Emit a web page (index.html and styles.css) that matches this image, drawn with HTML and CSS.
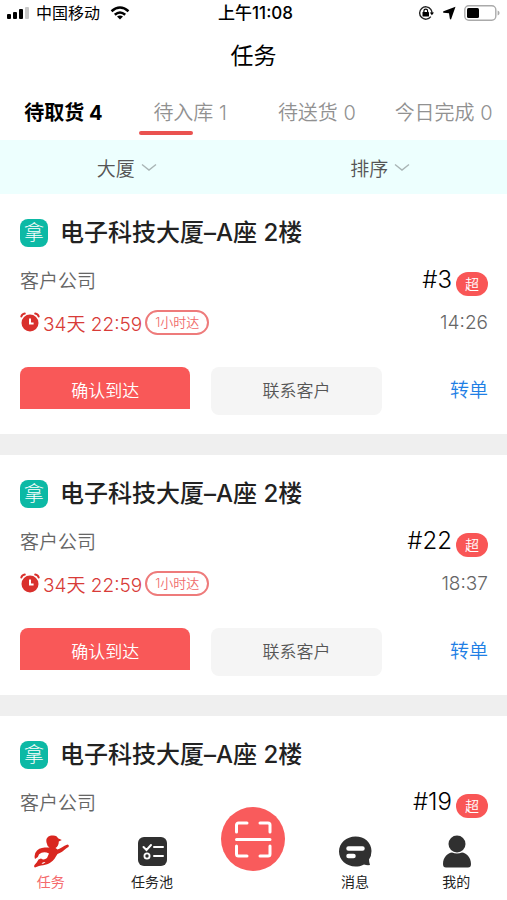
FILE: index.html
```html
<!DOCTYPE html>
<html lang="zh-CN">
<head>
<meta charset="utf-8">
<meta name="viewport" content="width=device-width, initial-scale=1">
<title>任务</title>
<link rel="stylesheet" href="styles.css">
</head>
<body>
<svg class="defs" aria-hidden="true">
  <symbol id="alarm" viewBox="0 0 20 20">
    <circle cx="10" cy="11" r="8.5" fill="#d9302c"/>
    <path d="M1.3 4.500Q2 2 4.800 1.600M18.700 4.500Q18 2 15.200 1.600" fill="none" stroke="#d9302c" stroke-width="2" stroke-linecap="round"/>
    <path d="M10 6.500v5h3.600" fill="none" stroke="#fff" stroke-width="2"/>
  </symbol>
  <symbol id="chevron" viewBox="0 0 16 9">
    <path d="M1 1.500l7 5.500 7-5.500" fill="none" stroke="#a9b5b5" stroke-width="1.4"/>
  </symbol>
</svg>

<div class="status">
  <div class="status-side">
    <svg width="23" height="12" viewBox="0 0 23 12"><rect x="0" y="7" width="4" height="5" rx="1"/><rect x="6" y="5" width="4" height="7" rx="1"/><rect x="12" y="2" width="4" height="10" rx="1"/><rect x="18" y="0" width="4" height="12" rx="1" fill="#c8c8c8"/></svg>
    <span class="carrier">中国移动</span>
    <svg width="20" height="14" viewBox="0 0 20 14" fill="none" stroke="#000" stroke-width="2.5"><path d="M1.500 5.200Q10-2.200 18.500 5.200M4.800 8.800Q10 4.200 15.200 8.800"/><path d="M10 13.500L7 10.600Q10 8.400 13 10.600z" fill="#000" stroke="none"/></svg>
  </div>
  <span class="clock">上午11:08</span>
  <div class="status-side status-right">
    <svg width="16" height="16" viewBox="0 0 16 16"><path d="M12.800 4.300A6.200 6.200 0 1 0 12.800 11.700M12.800 4.300Q14 6 14 8" fill="none" stroke="#222" stroke-width="1.400"/><path d="M11.800 7.500h4.200l-2.100 2.800z"/><rect x="4.500" y="7" width="6.500" height="4.500" rx=".6"/><path d="M5.900 7V5.900a1.850 1.850 0 0 1 3.700 0V7" fill="none" stroke="#000" stroke-width="1.200"/></svg>
    <svg width="14" height="14" viewBox="0 0 14 14"><path d="M13.500.8L9 13.500Q8 13.500 7.800 12.500L7 7.300 1.500 6.800Q.3 6 1.500 5.300z"/></svg>
    <svg width="36" height="16" viewBox="0 0 36 16"><rect x=".8" y=".8" width="31" height="14.400" rx="4" fill="#fff" stroke="#aaa" stroke-width="1.400"/><rect x="3" y="3" width="12" height="10" rx="1.500"/><path d="M33.600 5.500q2 .6 2 2.500t-2 2.500z" fill="#aaa"/></svg>
  </div>
</div>

<header class="title-bar"><h1>任务</h1></header>

<nav class="tabs" aria-label="任务状态">
  <button class="tab tab-strong">待取货 4</button>
  <button class="tab tab-marked">待入库 1</button>
  <button class="tab">待送货 0</button>
  <button class="tab">今日完成 0</button>
</nav>

<div class="filters">
  <button class="filter">大厦<svg class="chevron"><use href="#chevron"/></svg></button>
  <button class="filter">排序<svg class="chevron"><use href="#chevron"/></svg></button>
</div>

<main class="list">
  <article class="card">
    <div class="place"><span class="tag">拿</span><h2>电子科技大厦–A座 2楼</h2></div>
    <div class="row company"><span>客户公司</span><span class="order"><span class="number">#3</span><span class="badge">超</span></span></div>
    <div class="row time"><span class="left"><svg class="alarm"><use href="#alarm"/></svg><span>34天 22:59</span><span class="pill">1小时达</span></span><time>14:26</time></div>
    <div class="actions"><button class="confirm">确认到达</button><button class="contact">联系客户</button><a class="transfer" href="#">转单</a></div>
  </article>
  <article class="card">
    <div class="place"><span class="tag">拿</span><h2>电子科技大厦–A座 2楼</h2></div>
    <div class="row company"><span>客户公司</span><span class="order"><span class="number">#22</span><span class="badge">超</span></span></div>
    <div class="row time"><span class="left"><svg class="alarm"><use href="#alarm"/></svg><span>34天 22:59</span><span class="pill">1小时达</span></span><time>18:37</time></div>
    <div class="actions"><button class="confirm">确认到达</button><button class="contact">联系客户</button><a class="transfer" href="#">转单</a></div>
  </article>
  <article class="card">
    <div class="place"><span class="tag">拿</span><h2>电子科技大厦–A座 2楼</h2></div>
    <div class="row company"><span>客户公司</span><span class="order"><span class="number">#19</span><span class="badge">超</span></span></div>
  </article>
</main>

<nav class="bottom" aria-label="主导航">
  <a class="item current" href="#">
    <svg width="36" height="34" viewBox="0 0 36 34"><path d="M13.500 8.500C12.500 4 15.500 1.500 19.500 1.500C22.500 1.200 24.500 2.700 25 4.200L28.800 6L25.800 7.500C25.800 10.500 24.500 13 22.500 14L24.500 15.500C28 14.500 30 12 34.500 10.500Q36.500 11 35.500 13C31.500 15 29.500 18.500 24.500 20C22.500 23 21 26.500 17.500 28.500C13.500 31.500 7 31 2 33.500Q.5 33 1.500 31C3 29 4 28.500 5.500 25.500L8 24.500Q11 26.500 14 24L16 19.500Q12 17.500 8.500 18.800Q5.500 19.800 4.800 23L2 25Q.5 20 4 16.500C7.500 13.200 12 13.500 16.500 13.500Q14 12 13.500 8.500z" fill="#d9261f"/><path d="M8.500 30Q9.500 27.500 12.500 28Q11 29.800 8.500 30z" fill="#fff"/></svg>
    <span>任务</span>
  </a>
  <a class="item" href="#">
    <svg width="36" height="34" viewBox="0 0 36 34"><rect x="4" y="3" width="29" height="29" rx="6" fill="#303030"/><path d="M9.500 13l3 3 4.500-5M20 13h9M20 22h9" fill="none" stroke="#fff" stroke-width="2" stroke-linecap="round"/><circle cx="13" cy="22" r="2.600" fill="none" stroke="#fff" stroke-width="1.800"/></svg>
    <span>任务池</span>
  </a>
  <div class="item"><button class="scan" aria-label="扫码"><svg width="38" height="38" viewBox="0 0 38 38" fill="none" stroke="#fff" stroke-width="3" stroke-linecap="round"><path d="M2.500 12V5a2 2 0 0 1 2-2H13M26 3h8a2 2 0 0 1 2 2v7M36 26v8a2 2 0 0 1-2 2H26M13 36H4.500a2 2 0 0 1-2-2V26M2.500 19.500h33.500"/></svg></button></div>
  <a class="item" href="#">
    <svg width="36" height="34" viewBox="0 0 36 34"><path d="M18.500 2.500C27.500 2.500 34.500 8.500 34.500 17Q34.500 22 32 25.500Q32 28 33 31Q30 31.500 27 30.500C24 32.200 21 32.500 18.500 32.500C9.500 32.500 2 26 2 17.500S9.500 2.500 18.500 2.500z" fill="#303030"/><path d="M11.500 14.500h14M11.500 22h5" stroke="#fff" stroke-width="4.500" stroke-linecap="round"/></svg>
    <span>消息</span>
  </a>
  <a class="item" href="#">
    <svg width="36" height="34" viewBox="0 0 36 34"><circle cx="19" cy="10" r="8.500" fill="#303030"/><path d="M5 30C5 23 10 19 14 18.500Q19 20.500 24 18.500C28 19 33 23 33 30Q33 33.500 30 33.500H8Q5 33.500 5 30z" fill="#303030"/></svg>
    <span>我的</span>
  </a>
</nav>
</body>
</html>
```

FILE: styles.css
```css
* { box-sizing: border-box; }

body {
  margin: 0;
  height: 100vh;
  display: flex;
  flex-direction: column;
  overflow: hidden;
  background: #fff;
  color: #000;
  font-family: "Inter", "Noto Sans CJK SC", sans-serif;
}

button {
  margin: 0;
  padding: 0;
  border: 0;
  background: none;
  font: inherit;
  color: inherit;
}

a { color: inherit; text-decoration: none; }
h1, h2 { margin: 0; }
.defs { position: absolute; width: 0; height: 0; }

.status {
  display: flex;
  align-items: center;
  height: 26px;
  padding: 0 7px;
  font-size: 16px;
  line-height: 24px;
}

.status-side { flex: 1; display: flex; align-items: center; gap: 6px; }
.status-right { justify-content: flex-end; gap: 8px; }
.carrier { margin-right: 4px; }
.clock { padding-left: 4px; font-size: 17px; font-weight: 500; }

.title-bar {
  height: 60px;
  display: flex;
  align-items: center;
  justify-content: center;
}

.title-bar h1 { font-size: 23px; font-weight: 400; line-height: 32px; }

.tabs {
  display: grid;
  grid-template-columns: repeat(4, 1fr);
  height: 54px;
}

.tab {
  position: relative;
  color: #919191;
  font-size: 20px;
  font-weight: 350;
  line-height: 28px;
  white-space: nowrap;
}

.tab-strong { color: #000; font-weight: 700; }

.tab-marked::after {
  content: "";
  position: absolute;
  left: 12px;
  bottom: 5px;
  width: 54px;
  height: 4px;
  border-radius: 2px;
  background: #ea5250;
}

.filters {
  display: grid;
  grid-template-columns: 1fr 1fr;
  height: 54px;
  background: #edfffe;
}

.filter {
  display: flex;
  align-items: center;
  justify-content: center;
  gap: 6px;
  color: #555;
  font-size: 19px;
  font-weight: 350;
}

.chevron { width: 16px; height: 9px; }

.list {
  flex: 1;
  min-height: 0;
  overflow: hidden;
  display: flex;
  flex-direction: column;
  gap: 21px;
  background: #efefef;
}

.card {
  flex: none;
  padding: 21px 19px 19px 20px;
  background: #fff;
}

.card:last-child { flex: 1 0 auto; }

.place { display: flex; align-items: center; gap: 12px; height: 36px; }

.place h2 {
  color: #222;
  font-size: 24px;
  font-weight: 500;
  line-height: 36px;
  white-space: nowrap;
}

.tag {
  width: 28px;
  height: 28px;
  border-radius: 8px;
  background: #0cb9a5;
  color: #fff;
  font-size: 20px;
  font-weight: 300;
  line-height: 28px;
  text-align: center;
}

.row { display: flex; align-items: center; justify-content: space-between; color: #666; font-size: 19px; font-weight: 350; }
.company { height: 40px; margin-top: 8px; }
.order { display: flex; align-items: center; gap: 4px; }
.number { color: #000; font-size: 24px; }

.badge {
  width: 32px;
  margin-top: 10px;
  border-radius: 12px;
  background: #f95656;
  color: #fff;
  font-size: 14px;
  line-height: 24px;
  text-align: center;
}

.time { height: 46px; }
.left { display: flex; align-items: center; gap: 3px; color: #d83b38; }
.alarm { width: 20px; height: 20px; }

.pill {
  padding: 0 8px;
  border: 2px solid #ee7b7b;
  border-radius: 13px;
  color: #f06a6a;
  font-size: 13px;
  line-height: 21px;
}

.actions {
  display: grid;
  grid-template-columns: 4fr 4fr 2fr;
  column-gap: 21px;
  margin-top: 22px;
  font-size: 17px;
  font-weight: 350;
  line-height: 24px;
}

.confirm {
  height: 42px;
  padding-top: 5px;
  border-radius: 8px 8px 0 0;
  background: #f95858;
  color: #fff;
}

.contact { height: 48px; border-radius: 8px; background: #f5f5f5; color: #555; }
.transfer { align-self: center; color: #1f7fe5; font-size: 19px; text-align: right; }

.bottom {
  display: grid;
  grid-template-columns: repeat(5, 1fr);
  height: 78px;
  padding-top: 12px;
  background: #fff;
}

.item {
  display: flex;
  flex-direction: column;
  align-items: center;
  gap: 4px;
  color: #222;
  font-size: 14px;
  line-height: 20px;
}

.current { color: #f56a6c; }

.scan {
  display: flex;
  flex: none;
  align-items: center;
  justify-content: center;
  width: 64px;
  height: 64px;
  margin-top: -27px;
  border-radius: 50%;
  background: #f95b5c;
}
```
